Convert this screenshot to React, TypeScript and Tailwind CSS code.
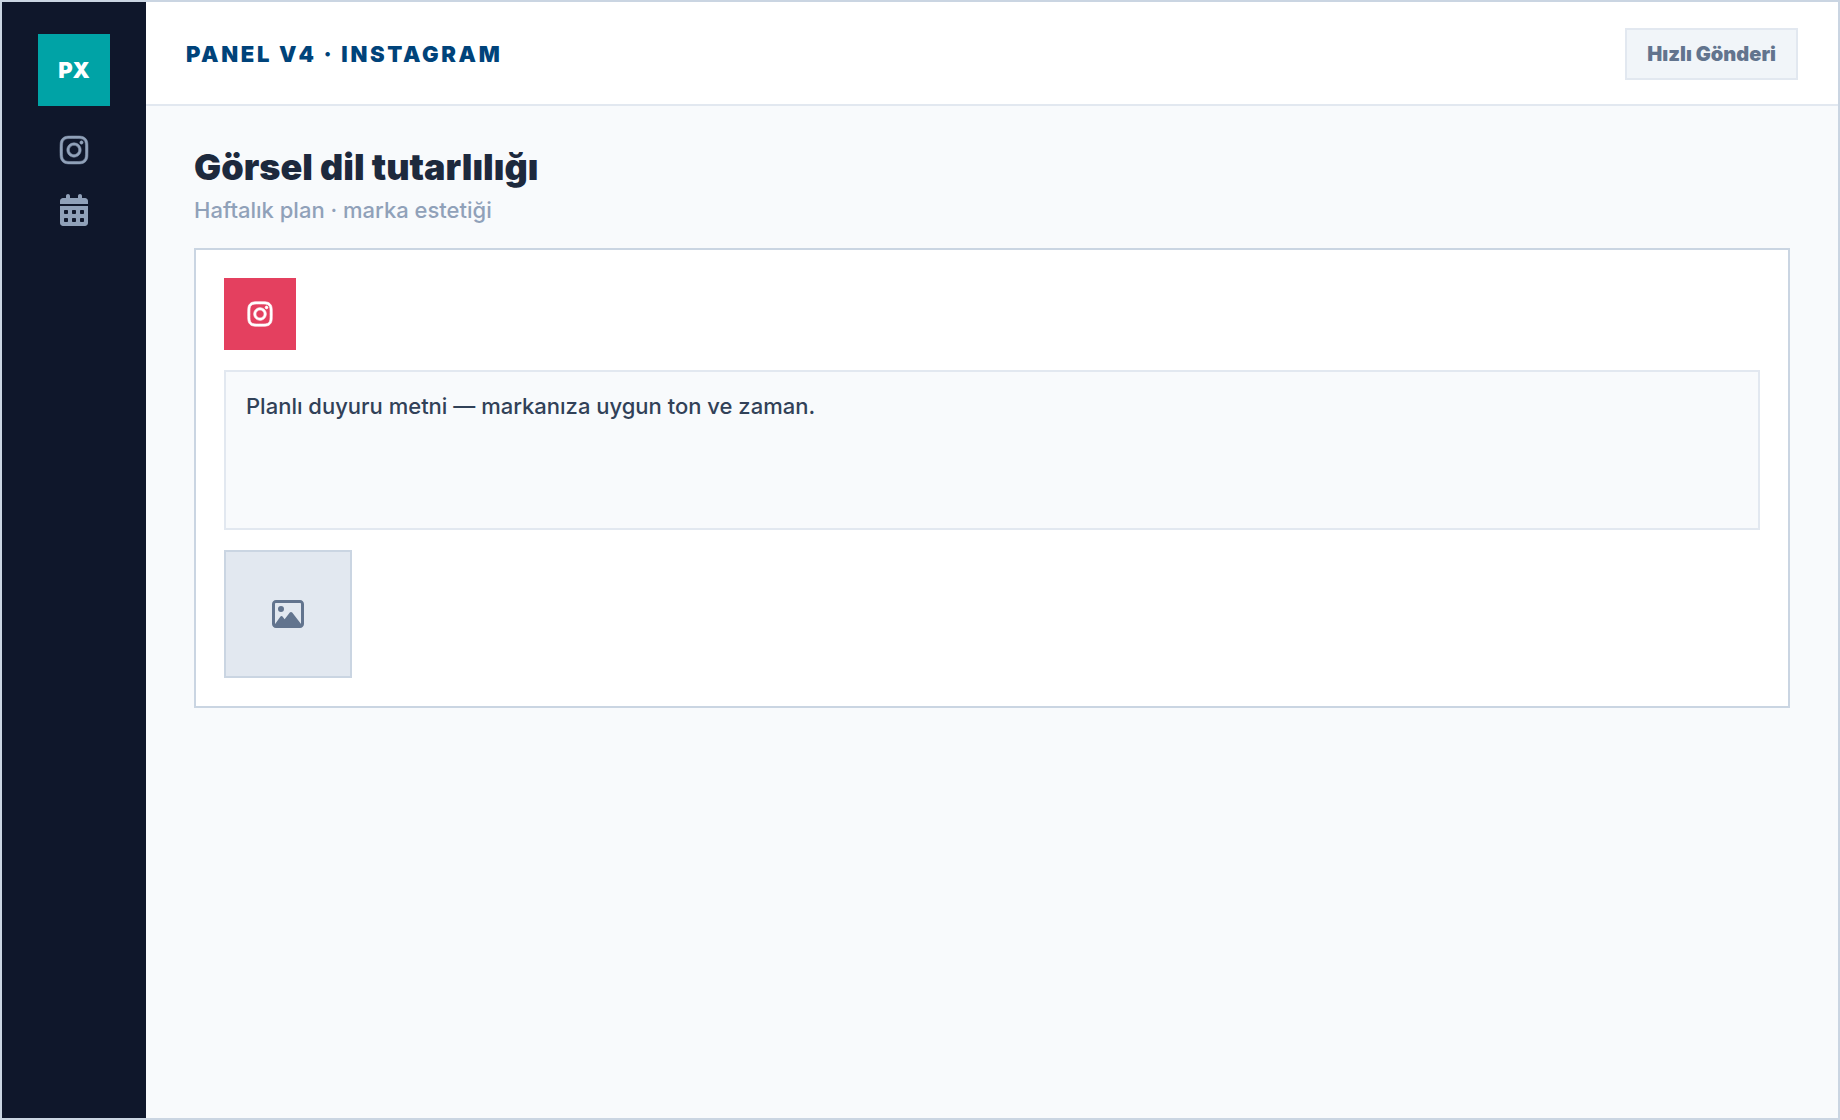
import { useState } from 'react'
import { FaCalendarDays, FaInstagram, FaRegImage } from 'react-icons/fa6'

const NAV = [
  { label: 'Instagram', icon: FaInstagram, iconClass: 'stroke-current stroke-[8px]' },
  { label: 'Takvim', icon: FaCalendarDays, iconClass: '' },
]

function Sidebar() {
  return (
    <nav className="flex w-36 shrink-0 flex-col items-center gap-7 bg-slate-900 py-8">
      <div className="flex h-18 w-18 items-center justify-center bg-[#00a3a6] text-[22px] font-black text-white">
        PX
      </div>
      {NAV.map(({ label, icon: Icon, iconClass }) => (
        <a key={label} href="#" aria-label={label} className="text-[32px] text-slate-400 hover:text-white">
          <Icon className={iconClass} />
        </a>
      ))}
    </nav>
  )
}

function Composer() {
  const [text, setText] = useState('Planlı duyuru metni — markanıza uygun ton ve zaman.')

  return (
    <section className="mt-6 flex flex-col items-start gap-5 border-2 border-slate-300 bg-white p-7">
      <div className="flex h-18 w-18 items-center justify-center bg-[#e4405f] text-[28px] text-white">
        <FaInstagram className="stroke-current stroke-[12px]" />
      </div>
      <textarea
        aria-label="Gönderi metni"
        value={text}
        onChange={(e) => setText(e.target.value)}
        className="block h-40 w-full resize-none border-2 border-slate-200 bg-slate-50 p-5 text-[22px] leading-7 font-medium text-slate-700 outline-none"
      />
      <button
        type="button"
        aria-label="Görsel ekle"
        className="flex h-32 w-32 items-center justify-center border-2 border-slate-300 bg-slate-200 text-[32px] text-slate-500"
      >
        <FaRegImage />
      </button>
    </section>
  )
}

export default function App() {
  return (
    <div className="flex min-h-screen border-2 border-slate-300 bg-slate-50 font-['Inter',sans-serif]">
      <Sidebar />
      <div className="flex min-w-0 flex-1 flex-col">
        <header className="flex items-center justify-between border-b-2 border-slate-200 bg-white px-10 pt-[26px] pb-6">
          <div className="text-[22px] leading-7 font-black tracking-[0.12em] text-[#00437a]">
            PANEL V4 · INSTAGRAM
          </div>
          <button
            type="button"
            className="border-2 border-slate-200 bg-slate-100 px-5 py-3 text-[20px] leading-6 font-black text-slate-500"
          >
            Hızlı Gönderi
          </button>
        </header>
        <main className="px-12 py-10">
          <h1 className="mb-2 text-[36px] leading-[42px] font-black text-slate-800">
            Görsel dil tutarlılığı
          </h1>
          <p className="text-[22px] leading-7 font-medium text-slate-400">Haftalık plan · marka estetiği</p>
          <Composer />
        </main>
      </div>
    </div>
  )
}
